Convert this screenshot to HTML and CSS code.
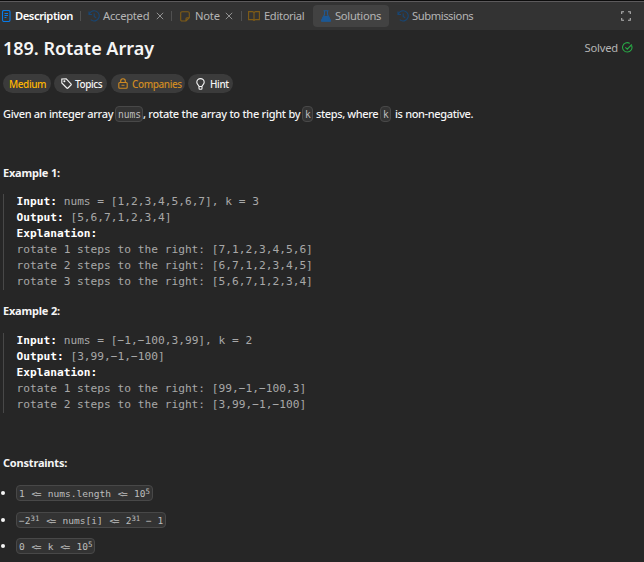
FILE: index.html
```html
<!DOCTYPE html>
<html lang="en">
<head>
<meta charset="utf-8">
<title>189. Rotate Array</title>
<link rel="stylesheet" href="styles.css">
</head>
<body>
<nav class="tabs">
  <div class="tab active description">
    <svg class="icon blue bright" width="10" height="12" viewBox="0 0 10 12"><rect x="1.500" y=".5" width="7.500" height="11" rx="1.400"/><path d="M3.500 3.500h3.500M3.500 5.500h3.500M3.500 7.500h2"/></svg>
    <span>Description</span>
  </div>
  <div class="tab accepted">
    <svg class="icon blue" width="12" height="12" viewBox="0 0 12 12"><path d="M1 1.5v3h3M1.3 4.3C2.2 2 4 .8 6.2.8a5.1 5.1 0 1 1-3.5 8.9M6.2 3.5v3l2 1.2"/></svg>
    <span>Accepted</span>
    <svg class="close" width="8" height="8" viewBox="0 0 8 8"><path d="M.8.8l6.4 6.4M7.2.8L.8 7.2"/></svg>
  </div>
  <div class="tab note">
    <svg class="icon gold" width="10" height="11" viewBox="0 0 10 11"><path d="M2 .7h6c.8 0 1.3.5 1.3 1.3v4.7L6 10H2C1.200 10 .7 9.500.7 8.700V2C.7 1.200 1.200.7 2 .7zM9.300 6.700H7C6.300 6.700 6 7 6 7.700V10"/></svg>
    <span>Note</span>
    <svg class="close" width="8" height="8" viewBox="0 0 8 8"><path d="M.8.8l6.4 6.4M7.2.8L.8 7.2"/></svg>
  </div>
  <div class="tab editorial">
    <svg class="icon gold" width="12" height="10" viewBox="0 0 12 10"><path d="M6 1.800C5.700 1 5.200.6 4.400.6H.6v8h3.700c.8 0 1.400.3 1.700.9.300-.6.900-.9 1.700-.9h3.700v-8H7.600C6.800.6 6.300 1 6 1.800zM6 1.800v7.500"/></svg>
    <span>Editorial</span>
  </div>
  <div class="tab solutions">
    <svg class="icon flask" width="10" height="12" viewBox="0 0 10 12"><path d="M2.500.8h5M3.500 1v3.500L.7 10c-.2.700.1 1.200.8 1.200h7c.7 0 1-.5.8-1.200L6.500 4.500V1"/><path class="fill" d="M2.500 6.500h5l1.800 4.500H.7z"/></svg>
    <span>Solutions</span>
  </div>
  <div class="tab submissions">
    <svg class="icon blue" width="12" height="12" viewBox="0 0 12 12"><path d="M1 1.500v3h3M1.300 4.300C2.200 2 4 .8 6.200.8a5.100 5.100 0 1 1-3.500 8.900M6.200 3.500v3l2 1.200"/></svg>
    <span>Submissions</span>
  </div>
  <svg class="expand" width="10" height="10" viewBox="0 0 10 10"><path d="M.7 3V.7H3M7 .7h2.300V3M9.300 7v2.300H7M3 9.300H.7V7"/></svg>
</nav>
<main>
  <header class="heading">
    <h1>189. Rotate Array</h1>
    <div class="solved"><span>Solved</span>
      <svg width="11" height="11" viewBox="0 0 11 11"><path d="M9.700 3.800A4.700 4.700 0 1 1 7.800 1.400M3.300 5.300l2 1.900 4.500-4.700"/></svg>
    </div>
  </header>
  <div class="pills">
    <span class="pill medium"><span>Medium</span></span>
    <span class="pill topics"><svg width="11" height="11" viewBox="0 0 11 11"><path d="M.8 1v4l5 5c.4.4.8.4 1.200 0l3-3c.4-.4.4-.8 0-1.200L5.200.8z"/><circle cx="3.400" cy="3.300" r=".5"/></svg><span>Topics</span></span>
    <span class="pill companies"><svg width="10" height="11" viewBox="0 0 10 11"><rect x=".8" y="4.500" width="8.400" height="5.700" rx="1"/><path d="M2.700 4.500V3a2.300 2.300 0 0 1 4.600 0v1.500M3.500 7.300h3"/></svg><span>Companies</span></span>
    <span class="pill hint"><svg width="9" height="12" viewBox="0 0 9 12"><path d="M3 8.500C2.800 7 .8 6.500.8 4.300a3.700 3.700 0 0 1 7.400 0C8.200 6.500 6.200 7 6 8.500zM3 8.500v1.700c0 .6.300 1 .8 1h1.400c.5 0 .8-.4.800-1V8.500"/></svg><span>Hint</span></span>
  </div>
  <p class="statement"><span class="t1">Given an integer array</span><code class="c1">nums</code><span class="t2">, rotate the array to the right by</span><code class="ck">k</code><span class="t3">steps, where</span><code class="ck">k</code><span class="t4">is non-negative.</span></p>
  <h2 class="ex1">Example 1:</h2>
<pre class="pre1"><b>Input:</b> nums = [1,2,3,4,5,6,7], k = 3
<b>Output:</b> [5,6,7,1,2,3,4]
<b>Explanation:</b>
rotate 1 steps to the right: [7,1,2,3,4,5,6]
rotate 2 steps to the right: [6,7,1,2,3,4,5]
rotate 3 steps to the right: [5,6,7,1,2,3,4]</pre>
  <h2 class="ex2">Example 2:</h2>
<pre class="pre2"><b>Input:</b> nums = [−1,−100,3,99], k = 2
<b>Output:</b> [3,99,−1,−100]
<b>Explanation:</b>
rotate 1 steps to the right: [99,−1,−100,3]
rotate 2 steps to the right: [3,99,−1,−100]</pre>
  <h2 class="cons">Constraints:</h2>
  <ul>
    <li><code>1 <span class="le">&lt;=</span> nums.length <span class="le">&lt;=</span> 10<sup>5</sup></code></li>
    <li><code>−2<sup>31</sup> <span class="le">&lt;=</span> nums[i] <span class="le">&lt;=</span> 2<sup>31</sup> − 1</code></li>
    <li><code>0 <span class="le">&lt;=</span> k <span class="le">&lt;=</span> 10<sup>5</sup></code></li>
  </ul>
</main>
</body>
</html>
```
FILE: styles.css
```css
* { box-sizing: border-box; }
html, body { height: 100%; }
body {
  margin: 0;
  overflow: hidden;
  background: #262626;
  color: #f5f5f5;
  font: 11.2px/16px "Noto Sans", "Open Sans", sans-serif;
}
svg { display: block; flex: none; fill: none; stroke: currentColor; stroke-width: 1.1; }
h1, h2, p, ul, pre { margin: 0; padding: 0; }
span { white-space: nowrap; }

.tabs {
  display: flex;
  align-items: center;
  height: 30px;
  padding-top: 2px;
  background: linear-gradient(#0c0c0c 1px, #5c5a5c 1px, #5c5a5c 2px, #333 2px);
  color: #b5b5b5;
}
.tab { display: flex; align-items: center; height: 22px; flex: none; }
.active { color: #fff; font-weight: 600; }
.description { width: 80px; padding-left: 1px; gap: 4px; letter-spacing: -.43px; }
.accepted::before, .note::before, .editorial::before {
  content: "";
  width: 1px;
  height: 10px;
  margin-right: 7px;
  background: #505050;
}
.accepted { width: 91px; }
.accepted span { width: 53px; margin-left: 3px; letter-spacing: -.25px; }
.note { width: 70px; }
.note::before { margin-right: 8px; }
.note span { width: 30px; margin-left: 5px; letter-spacing: -.2px; }
.editorial { width: 72px; }
.editorial::before { margin-right: 6px; }
.editorial span { margin-left: 4px; letter-spacing: -.35px; }
.solutions { width: 76px; padding-left: 8px; gap: 4px; border-radius: 4px; background: #424242; letter-spacing: -.28px; }
.submissions { padding-left: 8px; gap: 3px; letter-spacing: -.42px; }
.blue { color: #174675; }
.bright { color: #087be8; }
.gold { color: #805c16; }
.flask { color: #1d5894; }
.fill { fill: currentColor; }
.close { color: #929292; stroke-width: 1; }
.expand { margin: 0 13px 0 auto; color: #b5b5b5; }

main { padding: 0 3px; }
.heading { display: flex; align-items: center; justify-content: space-between; height: 37px; }
h1 { margin-top: -1px; font-size: 18px; line-height: 26px; font-weight: 600; letter-spacing: -.02px; }
.solved { display: flex; align-items: center; gap: 4px; margin-top: -2px; padding-right: 8px; color: #b5b5b5; letter-spacing: -.2px; }
.solved svg { color: #28a745; }

.pills { display: flex; gap: 3px; margin-top: 7px; }
.pill { display: flex; align-items: center; height: 19px; border-radius: 10px; background: #3b3b3b; font-size: 10px; font-weight: 500; letter-spacing: -.4px; }
.medium { width: 48px; padding-left: 6px; color: #ffb700; }
.topics { width: 53px; padding-left: 7px; gap: 3px; }
.companies { width: 74px; margin-left: 1px; padding-left: 7px; gap: 4px; color: #d08b22; }
.hint { width: 45px; padding-left: 8px; gap: 5px; }

code, pre { font-family: "DejaVu Sans Mono", monospace; }
code { border: 1px solid #484848; border-radius: 4px; background: #333; color: #bdbdbd; }
.statement { display: flex; align-items: center; height: 16px; margin-top: 13px; font-size: 11px; font-weight: 500; white-space: nowrap; }
.statement code { height: 16px; padding: 0 2px; font-size: 9.6px; line-height: 15px; font-weight: 400; }
.t1 { width: 112px; letter-spacing: -.33px; }
.c1 { width: 28px; }
.t2 { width: 159px; letter-spacing: -.27px; }
.ck { width: 11px; }
.t3 { width: 67px; padding-left: 3px; letter-spacing: -.38px; }
.t4 { padding-left: 4px; letter-spacing: -.35px; }

h2 { font-size: 11px; line-height: 16px; font-weight: 700; letter-spacing: -.2px; }
.ex1 { margin-top: 43px; }
pre { padding-left: 12.5px; border-left: 1px solid #484848; color: #a8a8a8; font-size: 11.2px; line-height: 16px; }
pre b { color: #fff; }
.pre1 { margin-top: 13px; }
.ex2 { margin-top: 13px; }
.pre2 { margin-top: 14px; }
.cons { margin-top: 42px; }
ul { display: grid; grid-template-rows: 27px 26px 16px; margin-top: 14px; list-style: none; }
li { display: flex; align-items: flex-start; }
li::before { content: ""; width: 4px; height: 4px; margin: 6px 11px 0 -2px; border-radius: 50%; background: #f5f5f5; }
li code { height: 16px; padding: 0 2px; font-size: 9.55px; line-height: 15px; }
.le { display: inline-block; padding-left: 1px; letter-spacing: -1.5px; margin-right: 2px; }
sup { position: relative; top: -3px; font-size: 7.4px; line-height: 0; vertical-align: baseline; }
```
